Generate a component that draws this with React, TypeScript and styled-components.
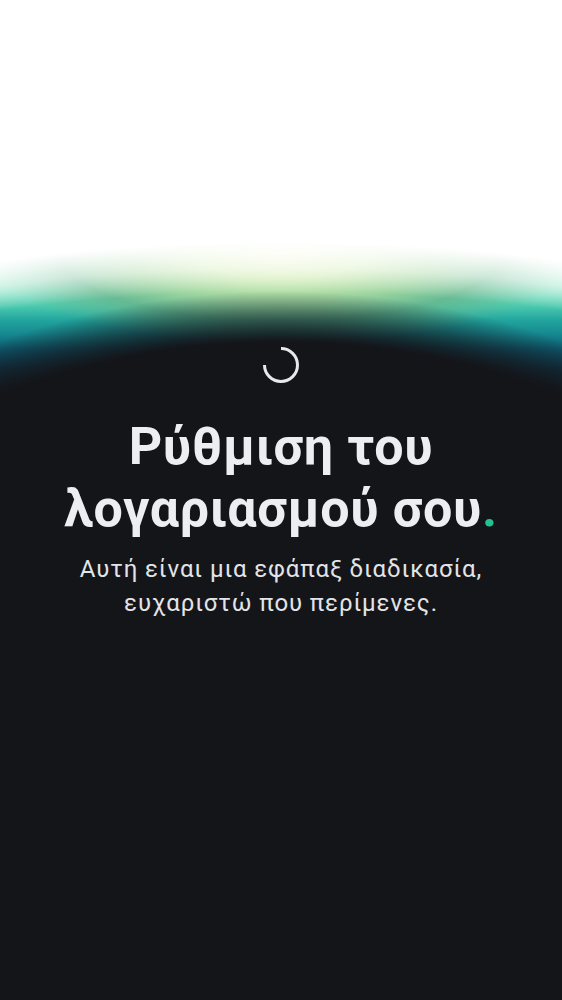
import React from "react";
import styled, { createGlobalStyle } from "styled-components";

const GlobalStyle = createGlobalStyle`
  html, body {
    margin: 0;
    padding: 0;
    background: #141519;
  }
  body {
    font-family: Roboto, "Noto Sans", sans-serif;
    -webkit-font-smoothing: antialiased;
  }
`;

// layers top->bottom: dark disc, white fade outside, yellow-green tint in the middle, teal base
const Screen = styled.main`
  min-height: 1000px;
  box-sizing: border-box;
  padding-top: 345px;
  display: flex;
  flex-direction: column;
  align-items: center;
  background-color: #141519;
  background-image:
    radial-gradient(
      circle at 50% 1113px,
      #141519 0,
      #141519 771px,
      rgba(20, 21, 25, 0.55) 794px,
      rgba(20, 21, 25, 0) 822px
    ),
    radial-gradient(
      circle at 50% 2438px,
      rgba(255, 255, 255, 0) 2146px,
      rgba(255, 255, 255, 0.6) 2170px,
      #ffffff 2196px
    ),
    radial-gradient(
      ellipse 300px 95px at 50% 250px,
      rgba(242, 249, 214, 1) 0%,
      rgba(214, 238, 184, 0.95) 30%,
      rgba(160, 212, 156, 0.9) 55%,
      rgba(104, 176, 134, 0.7) 75%,
      rgba(90, 170, 140, 0) 100%
    ),
    linear-gradient(
      180deg,
      #e6f8ea 250px,
      #a8ebd2 275px,
      #7fe0c0 290px,
      #4ccaae 306px,
      #22a59e 320px,
      #168890 334px,
      #0d5a70 350px,
      #0e3a4e 370px,
      #122430 395px,
      #141519 420px
    );
`;

const Spinner = styled.svg`
  width: 40px;
  height: 40px;
  display: block;
`;

const Title = styled.h1`
  margin: 31px 0 0;
  font-size: 52px;
  line-height: 62px;
  font-weight: 700;
  color: #eceef2;
  text-align: center;
  letter-spacing: 0.6px;
`;

const Dot = styled.span`
  color: #22c38e;
`;

const Subtitle = styled.p`
  margin: 12px 0 0;
  font-size: 24px;
  line-height: 34px;
  font-weight: 400;
  color: #e2e4e8;
  text-align: center;
  letter-spacing: 0.9px;
`;

function App() {
  return (
    <>
      <GlobalStyle />
      <Screen>
        <Spinner viewBox="0 0 40 40" fill="none">
          <path
            d="M20 3.5 A16.5 16.5 0 1 1 3.5 20"
            stroke="#e6e8ec"
            strokeWidth="3"
          />
        </Spinner>
        <Title>
          Ρύθμιση του
          <br />
          λογαριασμού σου<Dot>.</Dot>
        </Title>
        <Subtitle>
          Αυτή είναι μια εφάπαξ διαδικασία,
          <br />
          ευχαριστώ που περίμενες.
        </Subtitle>
      </Screen>
    </>
  );
}

export default App;
